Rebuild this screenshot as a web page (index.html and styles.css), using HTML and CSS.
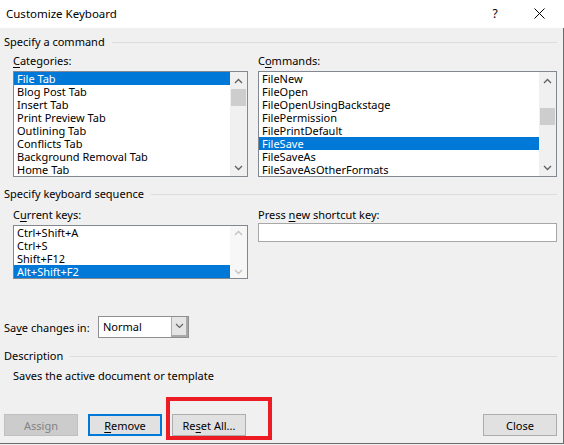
FILE: index.html
```html
<!DOCTYPE html>
<html>
<head>
<meta charset="utf-8">
<link rel="stylesheet" href="styles.css">
</head>
<body>
<div class="window">
  <div class="titlebar">
    <span class="title">Customize Keyboard</span>
    <span class="help">?</span>
    <span class="closex"><svg width="11" height="11" viewBox="0 0 11 11"><path d="M0.5 0.5L10.5 10.5M10.5 0.5L0.5 10.5" stroke="#000" stroke-width="1" fill="none"/></svg></span>
  </div>
  <div class="body">
    <div class="group-head"><span>Specify a command</span><i class="rule"></i></div>
    <div class="cols cmd-cols">
      <div class="col">
        <div class="lbl"><u>C</u>ategories:</div>
        <div class="listbox tall">
          <div class="items">
            <div class="item sel">File Tab</div>
            <div class="item">Blog Post Tab</div>
            <div class="item">Insert Tab</div>
            <div class="item">Print Preview Tab</div>
            <div class="item">Outlining Tab</div>
            <div class="item">Conflicts Tab</div>
            <div class="item">Background Removal Tab</div>
            <div class="item">Home Tab</div>
          </div>
          <div class="vscroll">
            <div class="arrow"><svg width="9" height="6" viewBox="0 0 9 6"><path d="M1 5L4.5 1.5L8 5" stroke="#606060" stroke-width="1.3" fill="none"/></svg></div>
            <div class="track"><div class="thumb"></div></div>
            <div class="arrow"><svg width="9" height="6" viewBox="0 0 9 6"><path d="M1 1L4.5 4.5L8 1" stroke="#606060" stroke-width="1.3" fill="none"/></svg></div>
          </div>
        </div>
      </div>
      <div class="col">
        <div class="lbl">C<u>o</u>mmands:</div>
        <div class="listbox tall">
          <div class="items">
            <div class="item">FileNew</div>
            <div class="item">FileOpen</div>
            <div class="item">FileOpenUsingBackstage</div>
            <div class="item">FilePermission</div>
            <div class="item">FilePrintDefault</div>
            <div class="item sel">FileSave</div>
            <div class="item">FileSaveAs</div>
            <div class="item">FileSaveAsOtherFormats</div>
          </div>
          <div class="vscroll">
            <div class="arrow"><svg width="9" height="6" viewBox="0 0 9 6"><path d="M1 5L4.5 1.5L8 5" stroke="#606060" stroke-width="1.3" fill="none"/></svg></div>
            <div class="track"><div class="thumb low"></div></div>
            <div class="arrow"><svg width="9" height="6" viewBox="0 0 9 6"><path d="M1 1L4.5 4.5L8 1" stroke="#606060" stroke-width="1.3" fill="none"/></svg></div>
          </div>
        </div>
      </div>
    </div>

    <div class="group-head seq-head"><span>Specify keyboard sequence</span><i class="rule"></i></div>
    <div class="cols key-cols">
      <div class="col">
        <div class="lbl">C<u>u</u>rrent keys:</div>
        <div class="listbox short">
          <div class="items">
            <div class="item">Ctrl+Shift+A</div>
            <div class="item">Ctrl+S</div>
            <div class="item">Shift+F12</div>
            <div class="item sel">Alt+Shift+F2</div>
          </div>
          <div class="vscroll disabled">
            <div class="arrow"><svg width="9" height="6" viewBox="0 0 9 6"><path d="M1 5L4.5 1.5L8 5" stroke="#c2c2c2" stroke-width="1.3" fill="none"/></svg></div>
            <div class="track"></div>
            <div class="arrow"><svg width="9" height="6" viewBox="0 0 9 6"><path d="M1 1L4.5 4.5L8 1" stroke="#c2c2c2" stroke-width="1.3" fill="none"/></svg></div>
          </div>
        </div>
      </div>
      <div class="col">
        <div class="lbl lbl-tight">Press <u>n</u>ew shortcut key:</div>
        <div class="textbox"></div>
      </div>
    </div>

    <div class="save-row">
      <span class="save-lbl">Sa<u>v</u>e changes in:</span>
      <div class="combo">
        <span class="combo-val">Normal</span>
        <span class="combo-btn"><svg width="9" height="6" viewBox="0 0 9 6"><path d="M1 1L4.5 4.5L8 1" stroke="#606060" stroke-width="1.1" fill="none"/></svg></span>
      </div>
    </div>

    <div class="group-head desc-head"><span>Description</span><i class="rule"></i></div>
    <div class="desc">Saves the active document or template</div>

    <div class="buttons">
      <button class="btn disabled">Assign</button>
      <button class="btn default"><u>R</u>emove</button>
      <button class="btn">Re<u>s</u>et All...</button>
      <span class="spacer"></span>
      <button class="btn">Close</button>
    </div>
  </div>
  <div class="highlight"></div>
</div>
</body>
</html>
```

FILE: styles.css
```css
* { box-sizing: border-box; }
html, body { margin: 0; padding: 0; }
body {
  width: 564px;
  height: 445px;
  background: #f0f0f0;
  font-family: "Noto Sans", "Open Sans", sans-serif;
  font-size: 11px;
  color: #000;
  overflow: hidden;
}
u { text-decoration-thickness: 1px; text-underline-offset: 2px; }

.window {
  position: relative;
  width: 564px;
  height: 445px;
  display: flex;
  flex-direction: column;
}

.titlebar {
  height: 28px;
  background: #fff;
  display: flex;
  align-items: center;
  padding: 0 0 2px 6px;
  flex-shrink: 0;
}
.title { flex: 1; font-size: 11.5px; }
.help { width: 12px; text-align: center; margin-right: 33px; font-size: 12px; }
.closex { display: flex; margin-right: 19px; }

.body {
  flex: 1;
  background: #f0f0f0;
  border-right: 1px solid #6b6b6b;
  border-bottom: 1px solid #6b6b6b;
  margin-bottom: 1px;
  padding: 6px 6px 0 4px;
  display: flex;
  flex-direction: column;
}

.group-head {
  display: flex;
  align-items: center;
  height: 16px;
  line-height: 16px;
}
.group-head .rule {
  flex: 1;
  border-top: 1px solid #dcdcdc;
  margin-left: 7px;
  margin-top: 1px;
}
.seq-head { margin-top: 9px; }
.desc-head { margin-top: 10px; }

.cols {
  display: grid;
  grid-template-columns: 235px 299px;
  column-gap: 10px;
  margin-left: 9px;
}
.cmd-cols { margin-top: 3px; }
.key-cols { margin-top: 5px; }

.lbl { height: 16px; line-height: 16px; margin-bottom: 2px; }
.lbl-tight { margin-bottom: 0; }

.listbox {
  display: flex;
  background: #fff;
  border: 1px solid #828790;
}
.listbox.tall { height: 106px; }
.listbox.short { height: 54px; }
.items { flex: 1; overflow: hidden; }
.item {
  height: 13px;
  line-height: 13px;
  padding-left: 3px;
  white-space: nowrap;
}
.item.sel { background: #0078d7; color: #fff; }

.vscroll {
  width: 17px;
  background: #f0f0f0;
  display: flex;
  flex-direction: column;
}
.vscroll.disabled { background: #f7f7f7; }
.arrow {
  height: 17px;
  display: flex;
  align-items: center;
  justify-content: center;
  flex-shrink: 0;
}
.listbox.short .arrow { height: 13px; }
.track { flex: 1; }
.thumb { height: 17px; margin: 0 1px; background: #cdcdcd; }
.thumb.low { margin-top: 19px; }

.textbox {
  height: 19px;
  background: #fff;
  border: 1px solid #a8a8a8;
}

.save-row {
  display: flex;
  align-items: center;
  height: 22px;
  margin-top: 37px;
}
.save-lbl { width: 94px; }
.combo {
  width: 91px;
  height: 22px;
  display: flex;
  background: #fff;
  border: 1px solid #8f8f8f;
}
.combo-val { flex: 1; line-height: 20px; padding-left: 4px; }
.combo-btn {
  width: 17px;
  background: #e5e5e5;
  border-left: 1px solid #adadad;
  border-right: 2px solid #a8a8a8;
  border-bottom: 2px solid #a8a8a8;
  display: flex;
  align-items: center;
  justify-content: center;
}

.desc { margin-top: 4px; padding-left: 9px; height: 16px; line-height: 16px; }

.buttons {
  display: flex;
  column-gap: 10px;
  margin-top: 30px;
}
.spacer { flex: 1; }
.btn {
  width: 74px;
  height: 22px;
  padding: 0;
  font-family: inherit;
  font-size: 11px;
  color: #000;
  background: #e1e1e1;
  border: 1px solid #adadad;
  border-radius: 0;
}
.btn.disabled { background: #cccccc; border-color: #bfbfbf; color: #838383; }
.btn.default { border: 2px solid #0078d7; }

.highlight {
  position: absolute;
  left: 166px;
  top: 397px;
  width: 106px;
  height: 43px;
  border: 4px solid #ed1c24;
}
```
